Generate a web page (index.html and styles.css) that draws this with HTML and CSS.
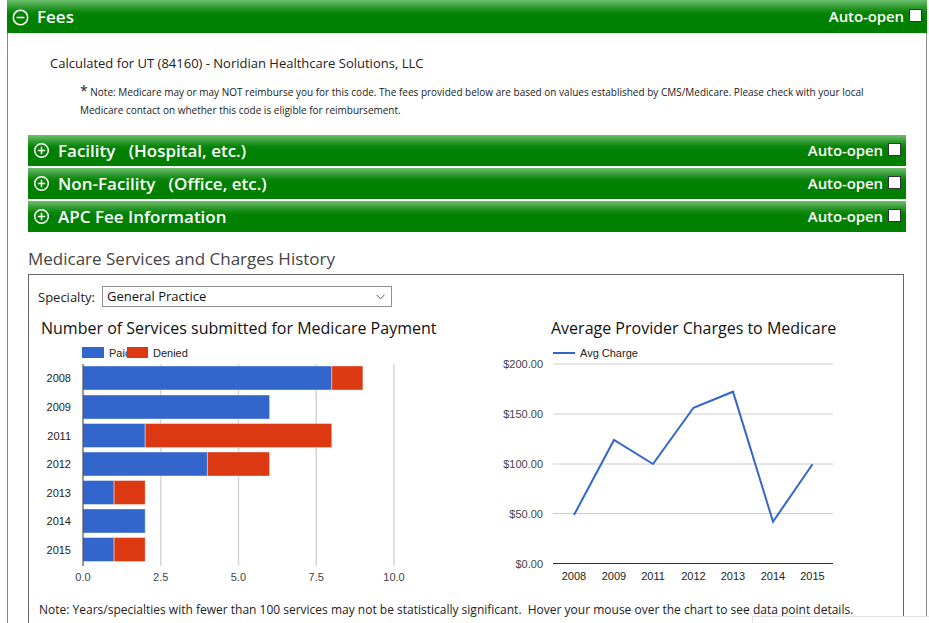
FILE: index.html
```html
<!DOCTYPE html>
<html>
<head>
<meta charset="utf-8">
<link rel="stylesheet" href="styles.css">
</head>
<body>
<div class="panel">
  <div class="bar bar-main">
    <div class="bar-left">
      <svg class="ico" width="17" height="17" viewBox="0 0 17 17"><circle cx="8.5" cy="8.5" r="7.2" fill="none" stroke="#fff" stroke-width="1.6"/><line x1="4.6" y1="8.5" x2="12.4" y2="8.5" stroke="#fff" stroke-width="1.6"/></svg>
      <span class="bar-title">Fees</span>
    </div>
    <div class="auto">Auto-open <span class="chk"></span></div>
  </div>
  <div class="panel-body">
    <div class="calc">Calculated for UT (84160) - Noridian Healthcare Solutions, LLC</div>
    <div class="note"><span class="ast">*</span> Note: Medicare may or may NOT reimburse you for this code. The fees provided below are based on values established by CMS/Medicare. Please check with your local Medicare contact on whether this code is eligible for reimbursement.</div>

    <div class="subbars">
      <div class="bar bar-sub">
        <div class="bar-left">
          <svg class="ico" width="17" height="17" viewBox="0 0 17 17"><circle cx="8.5" cy="8.5" r="6.8" fill="none" stroke="#fff" stroke-width="1.5"/><line x1="4.8" y1="8.5" x2="12.2" y2="8.5" stroke="#fff" stroke-width="1.5"/><line x1="8.5" y1="4.8" x2="8.5" y2="12.2" stroke="#fff" stroke-width="1.5"/></svg>
          <span class="bar-title">Facility&nbsp;&nbsp;&nbsp;(Hospital, etc.)</span>
        </div>
        <div class="auto">Auto-open <span class="chk"></span></div>
      </div>
      <div class="bar bar-sub">
        <div class="bar-left">
          <svg class="ico" width="17" height="17" viewBox="0 0 17 17"><circle cx="8.5" cy="8.5" r="6.8" fill="none" stroke="#fff" stroke-width="1.5"/><line x1="4.8" y1="8.5" x2="12.2" y2="8.5" stroke="#fff" stroke-width="1.5"/><line x1="8.5" y1="4.8" x2="8.5" y2="12.2" stroke="#fff" stroke-width="1.5"/></svg>
          <span class="bar-title">Non-Facility&nbsp;&nbsp;&nbsp;(Office, etc.)</span>
        </div>
        <div class="auto">Auto-open <span class="chk"></span></div>
      </div>
      <div class="bar bar-sub">
        <div class="bar-left">
          <svg class="ico" width="17" height="17" viewBox="0 0 17 17"><circle cx="8.5" cy="8.5" r="6.8" fill="none" stroke="#fff" stroke-width="1.5"/><line x1="4.8" y1="8.5" x2="12.2" y2="8.5" stroke="#fff" stroke-width="1.5"/><line x1="8.5" y1="4.8" x2="8.5" y2="12.2" stroke="#fff" stroke-width="1.5"/></svg>
          <span class="bar-title">APC Fee Information</span>
        </div>
        <div class="auto">Auto-open <span class="chk"></span></div>
      </div>
    </div>

    <div class="section-title">Medicare Services and Charges History</div>
    <div class="chart-box">
      <div class="spec-row">
        <span class="spec-label">Specialty:</span>
        <div class="select">
          <span>General Practice</span>
          <svg class="chev" width="9" height="6" viewBox="0 0 9 6"><polyline points="0.5,0.8 4.5,4.8 8.5,0.8" fill="none" stroke="#555" stroke-width="1"/></svg>
        </div>
      </div>
      <div class="chart-row">
        <svg class="chart-left" width="440" height="280" viewBox="29 312 440 280">
          <text x="41" y="334" class="ctitle">Number of Services submitted for Medicare Payment</text>
          <text x="109" y="357" class="lg">Paid</text>
          <rect x="82" y="347" width="22" height="11" fill="#3366cc"/>
          <rect x="127" y="347" width="21" height="11" fill="#dc3912"/>
          <text x="153" y="357" class="lg">Denied</text>
          <g stroke="#d6d6d6" stroke-width="1.5">
            <line x1="160.75" y1="364" x2="160.75" y2="566"/>
            <line x1="238.5" y1="364" x2="238.5" y2="566"/>
            <line x1="316.25" y1="364" x2="316.25" y2="566"/>
            <line x1="394" y1="364" x2="394" y2="566"/>
          </g>
          <g stroke="#ffffff" stroke-opacity="0.4" stroke-width="1">
            <rect x="83" y="366" width="248.8" height="24" fill="#3366cc"/>
            <rect x="331.8" y="366" width="31.1" height="24" fill="#dc3912"/>
            <rect x="83" y="395" width="186.6" height="24" fill="#3366cc"/>
            <rect x="83" y="423.5" width="62.2" height="24" fill="#3366cc"/>
            <rect x="145.2" y="423.5" width="186.6" height="24" fill="#dc3912"/>
            <rect x="83" y="452" width="124.4" height="24" fill="#3366cc"/>
            <rect x="207.4" y="452" width="62.2" height="24" fill="#dc3912"/>
            <rect x="83" y="480.5" width="31.1" height="24" fill="#3366cc"/>
            <rect x="114.1" y="480.5" width="31.1" height="24" fill="#dc3912"/>
            <rect x="83" y="509" width="62.2" height="24" fill="#3366cc"/>
            <rect x="83" y="537.5" width="31.1" height="24" fill="#3366cc"/>
            <rect x="114.1" y="537.5" width="31.1" height="24" fill="#dc3912"/>
          </g>
          <line x1="83" y1="364" x2="83" y2="566" stroke="#333" stroke-width="1"/>
          <g class="ax" text-anchor="end">
            <text x="71" y="382">2008</text>
            <text x="71" y="411">2009</text>
            <text x="71" y="439.5">2011</text>
            <text x="71" y="468">2012</text>
            <text x="71" y="496.5">2013</text>
            <text x="71" y="525">2014</text>
            <text x="71" y="553.5">2015</text>
          </g>
          <g class="ax ax2" text-anchor="middle">
            <text x="83" y="581">0.0</text>
            <text x="160.75" y="581">2.5</text>
            <text x="238.5" y="581">5.0</text>
            <text x="316.25" y="581">7.5</text>
            <text x="394" y="581">10.0</text>
          </g>
        </svg>
        <svg class="chart-right" width="434" height="280" viewBox="469 312 434 280">
          <text x="551" y="334" class="ctitle">Average Provider Charges to Medicare</text>
          <line x1="553" y1="353" x2="575" y2="353" stroke="#3366cc" stroke-width="2"/>
          <text x="580" y="357" class="lg">Avg Charge</text>
          <g stroke="#cccccc" stroke-width="1">
            <line x1="553" y1="364" x2="833" y2="364"/>
            <line x1="553" y1="414" x2="833" y2="414"/>
            <line x1="553" y1="464" x2="833" y2="464"/>
            <line x1="553" y1="513.5" x2="833" y2="513.5"/>
          </g>
          <line x1="553" y1="563.5" x2="833" y2="563.5" stroke="#333" stroke-width="1"/>
          <polyline points="574,515 614,440 653,464 693.5,407.7 733,391.7 773,521.7 812.5,464.3" fill="none" stroke="#3366cc" stroke-width="2"/>
          <g class="ax ax2" text-anchor="end">
            <text x="543" y="368">$200.00</text>
            <text x="543" y="418">$150.00</text>
            <text x="543" y="468">$100.00</text>
            <text x="543" y="517.5">$50.00</text>
            <text x="543" y="567.5">$0.00</text>
          </g>
          <g class="ax" text-anchor="middle">
            <text x="574" y="580">2008</text>
            <text x="614" y="580">2009</text>
            <text x="653" y="580">2011</text>
            <text x="693.5" y="580">2012</text>
            <text x="733" y="580">2013</text>
            <text x="773" y="580">2014</text>
            <text x="812.5" y="580">2015</text>
          </g>
        </svg>
      </div>
      <div class="chart-note">Note: Years/specialties with fewer than 100 services may not be statistically significant.&nbsp; Hover your mouse over the chart to see data point details.</div>
    </div>
  </div>
</div>
<div class="popup"></div>
</body>
</html>
```

FILE: styles.css
```css
html, body {
  margin: 0;
  padding: 0;
  background: #fff;
}
body {
  font-family: "Open Sans", "DejaVu Sans", sans-serif;
  color: #222;
  overflow: hidden;
  height: 623px;
  position: relative;
}
.panel {
  margin-left: 7px;
  width: 920px;
}
.bar {
  display: flex;
  align-items: center;
  justify-content: space-between;
  background: linear-gradient(to bottom, #6cc06c 0%, #3aa03a 18%, #0b870b 36%, #008000 48%, #008000 100%);
  color: #fff;
  font-weight: 600;
  box-sizing: border-box;
}
.bar-main {
  height: 33px;
  padding: 0 5px 0 5px;
}
.bar-sub {
  height: 31px;
  padding: 0 5px 0 5px;
  margin-bottom: 2px;
}
.bar-left {
  display: flex;
  align-items: center;
}
.ico {
  display: block;
  margin-right: 8px;
}
.bar-main .ico {
  margin-top: 2px;
}
.bar-title {
  font-size: 17px;
  line-height: 20px;
  white-space: pre;
}
.auto {
  display: flex;
  align-items: center;
  font-size: 15px;
  line-height: 18px;
  margin-bottom: 2px;
  letter-spacing: -0.1px;
}
.chk {
  display: inline-block;
  width: 11px;
  height: 11px;
  background: #fff;
  border: 1px solid #333;
  margin-left: 5px;
}
.panel-body {
  border-left: 1px solid #8a8a8a;
  border-right: 1px solid #8a8a8a;
  padding: 21px 20px 0 20px;
  height: 700px;
}
.calc {
  font-size: 13px;
  line-height: 18px;
  margin-left: 22px;
  color: #222;
}
.note {
  font-size: 10px;
  line-height: 18px;
  margin: 11px 20px 16px 52px;
  color: #222;
}
.ast {
  font-size: 14px;
  line-height: 10px;
}
.subbars {
  display: flex;
  flex-direction: column;
}
.section-title {
  font-size: 17px;
  line-height: 24px;
  color: #444;
  margin-top: 13px;
}
.chart-box {
  margin-top: 3px;
  margin-right: 2px;
  border: 1px solid #666;
  height: 500px;
}
.spec-row {
  display: flex;
  align-items: center;
  padding: 11px 0 0 9px;
  height: 21px;
}
.spec-label {
  font-size: 13px;
  margin-right: 7px;
  color: #222;
}
.select {
  width: 290px;
  height: 21px;
  box-sizing: border-box;
  border: 1px solid #8f8f8f;
  font-size: 13px;
  line-height: 19px;
  padding-left: 4px;
  display: flex;
  justify-content: space-between;
  align-items: center;
  color: #111;
}
.chev {
  margin-right: 6px;
}
.chart-row {
  display: flex;
  margin-top: 5px;
}
.chart-row svg {
  display: block;
}
.ctitle {
  font-family: "Open Sans", "DejaVu Sans", sans-serif;
  font-size: 16px;
  fill: #111;
}
.lg {
  font-family: "Liberation Sans", Arial, sans-serif;
  font-size: 11px;
  fill: #222;
}
.ax text {
  font-family: "Liberation Sans", Arial, sans-serif;
  font-size: 11px;
  fill: #222;
}
.ax2 text {
  fill: #444;
}
.chart-note {
  margin-top: 9px;
  padding-left: 10px;
  font-size: 12px;
  line-height: 17px;
  white-space: nowrap;
}
.popup {
  position: absolute;
  left: 752px;
  top: 616px;
  width: 200px;
  height: 40px;
  background: #fff;
  border-top: 1px solid #e2e2e2;
  border-left: 1px solid #e2e2e2;
}
```
